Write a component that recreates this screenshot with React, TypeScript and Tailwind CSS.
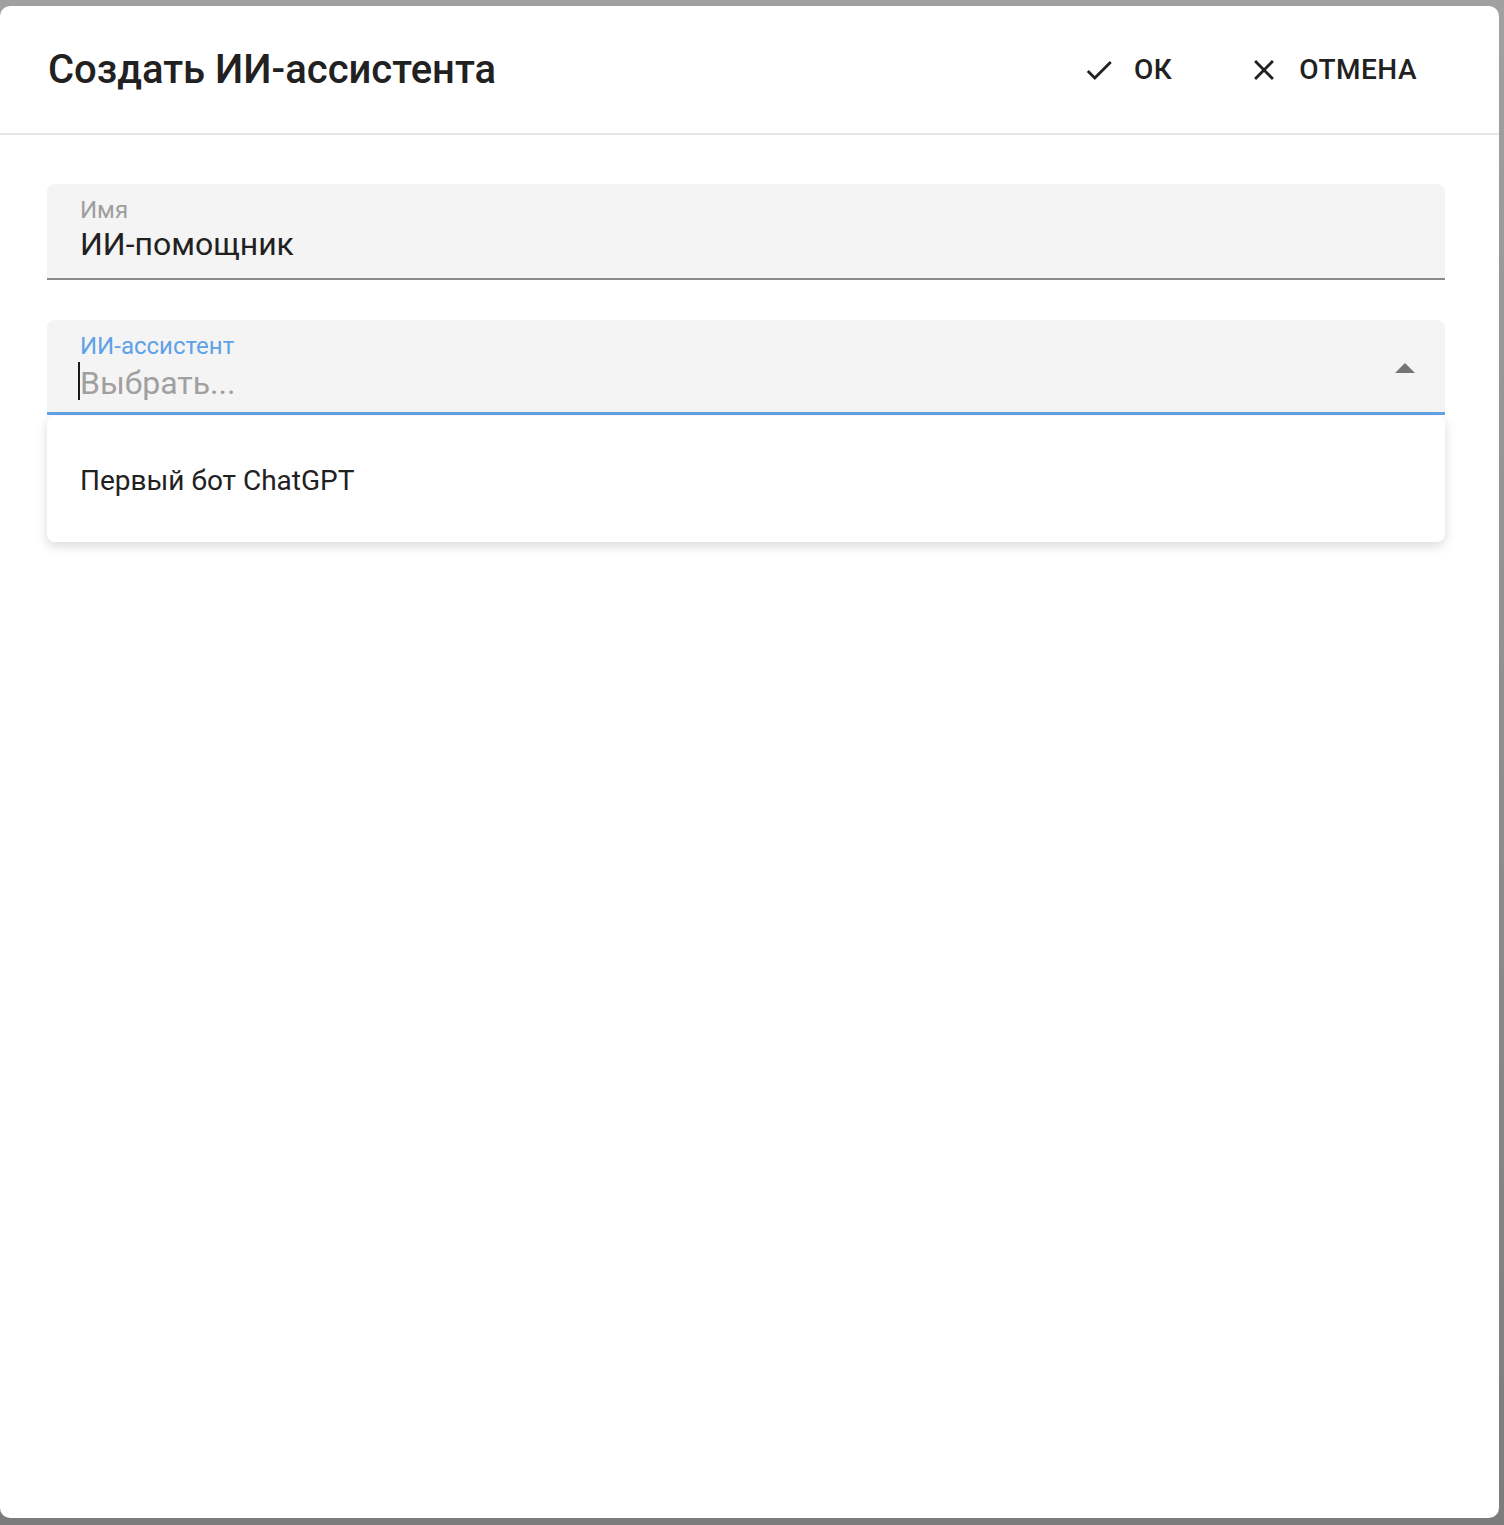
import { MdCheck, MdClose } from 'react-icons/md';

const font = { fontFamily: 'Roboto, "Noto Sans", sans-serif' };

export default function App() {
  return (
    <div
      className="h-[1525px] w-full pt-[6px] pr-[5px] pb-[7px] bg-gradient-to-b from-[#a0a0a0] to-[#7c7c7c]"
      style={font}
    >
      <div className="h-full w-full rounded-[10px] bg-white flex flex-col">
        {/* Header */}
        <div className="h-[129px] shrink-0 flex items-center justify-between pl-[48px] pr-[66px] border-b-2 border-[#e6e6e6]">
          <h2 className="text-[40px] font-medium text-[#212121] leading-none">
            Создать ИИ-ассистента
          </h2>
          <div className="flex items-center gap-[43px]">
            <button className="flex items-center gap-[18px] px-4 text-[28px] font-medium tracking-[0.5px] text-[#212121] uppercase">
              <MdCheck className="w-[34px] h-[34px]" />
              ОК
            </button>
            <button className="flex items-center gap-[18px] px-4 text-[28px] font-medium tracking-[0.5px] text-[#212121] uppercase">
              <MdClose className="w-[34px] h-[34px]" />
              Отмена
            </button>
          </div>
        </div>

        {/* Body */}
        <div className="flex flex-col gap-[40px] pl-[47px] pr-[54px] pt-[49px]">
          {/* Name field */}
          <div className="h-[96px] rounded-t-[8px] bg-[#f4f4f4] border-b-2 border-[#8a8a8a] pl-[33px] pt-[13px]">
            <div className="text-[24px] leading-[26px] text-[#9e9e9e]">Имя</div>
            <div className="mt-[3px] text-[32px] leading-[36px] text-[#212121]">ИИ-помощник</div>
          </div>

          {/* Assistant select */}
          <div className="relative">
            <div className="h-[95px] rounded-t-[8px] bg-[#f4f4f4] border-b-[3px] border-[#62a3e6] pl-[33px] pr-[30px] pt-[13px] flex items-start justify-between">
              <div>
                <div className="text-[24px] leading-[26px] text-[#5fa2e7]">ИИ-ассистент</div>
                <div className="relative mt-[6px] text-[32px] leading-[36px] text-[#a0a0a0]">
                  <span className="absolute -left-[2px] -top-[3px] w-[2px] h-[38px] bg-[#1a1a1a]" />
                  Выбрать...
                </div>
              </div>
              <svg className="mt-[30px] w-[20px] h-[10px]" viewBox="0 0 20 10">
                <path d="M0 10 L10 0 L20 10 Z" fill="#757575" />
              </svg>
            </div>

            {/* Dropdown menu */}
            <div className="absolute left-0 right-0 top-full mt-[1px] h-[126px] rounded-[8px] bg-white shadow-[0_4px_12px_rgba(0,0,0,0.15)] pl-[33px] pt-[48px]">
              <span className="text-[28px] leading-[34px] text-[#212121]">Первый бот ChatGPT</span>
            </div>
          </div>
        </div>
      </div>
    </div>
  );
}
